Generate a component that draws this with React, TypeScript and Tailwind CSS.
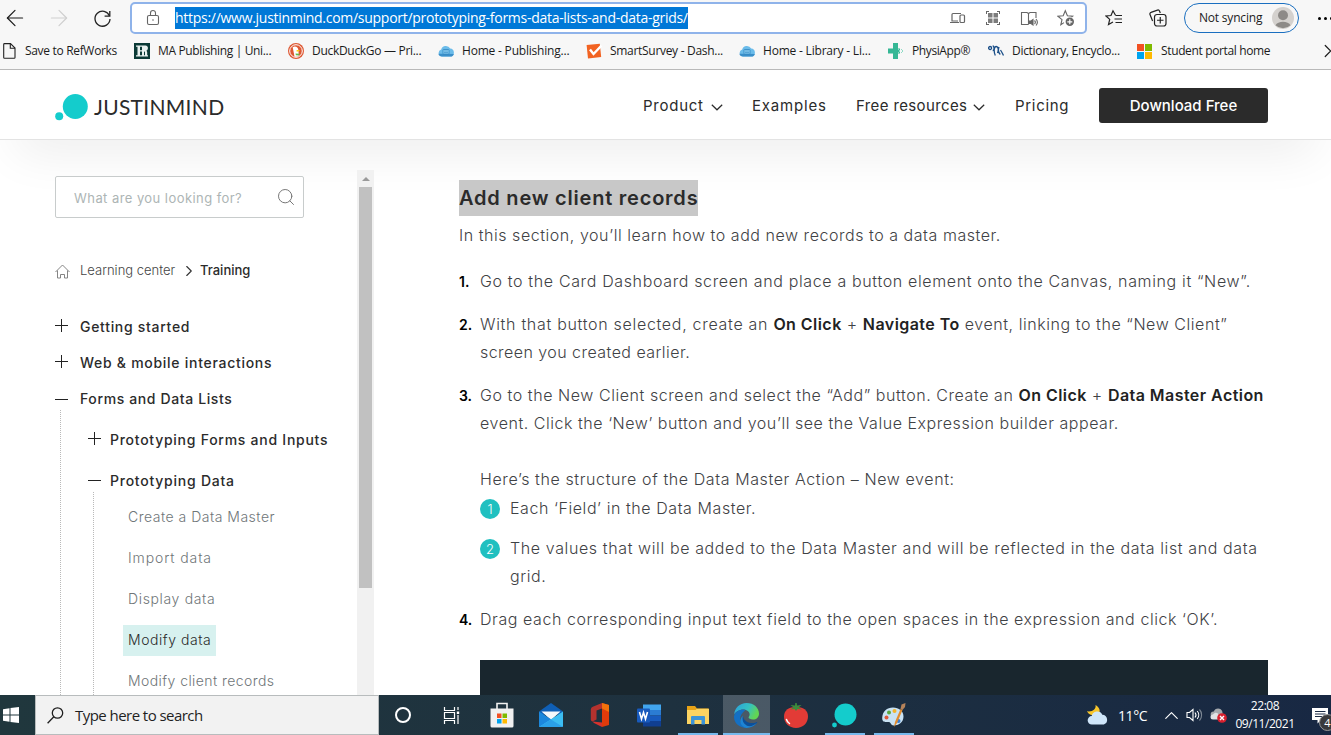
import type { ReactNode } from "react";
import { ArrowLeft, ArrowRight, ChevronRight, ChevronUp, Search } from "lucide-react";
import clsx from "clsx";

const UI_FONT = "font-['Open_Sans','Noto_Sans',sans-serif]";
const SITE_FONT = "font-['Inter','Liberation_Sans',sans-serif]";

/* ---------- browser chrome ---------- */

function CloudIcon() {
  return (
    <svg width="16" height="16" viewBox="0 0 16 16">
      <path d="M4 13.600a3.700 3.700 0 0 1-.8-7.200A4.900 4.900 0 0 1 12.200 5.500a4.100 4.100 0 0 1 .4 8.100Z" fill="#6bbcea" />
      <path d="M.4 10.800c.3 1.700 1.700 2.800 3.600 2.800h8.600c1.700 0 3-1.100 3.200-2.600Z" fill="#3b8fc9" />
      <rect x="5" y="6.500" width="6" height="4.500" rx=".5" fill="#8fd0f2" stroke="#2f86c2" strokeWidth=".8" />
      <path d="M6 8h4M6 9.500h4" stroke="#2f86c2" strokeWidth=".6" />
    </svg>
  );
}

const bookmarks: { label: string; width: string; tracking: string; icon: ReactNode }[] = [
  {
    label: "Save to RefWorks",
    width: "w-[133px]",
    tracking: "tracking-[-0.32px]",
    icon: (
      <svg width="16" height="16" viewBox="0 0 16 16" fill="none" stroke="#222" strokeWidth="1.1">
        <path d="M3.500.6h6l4.500 4.500v9.400a.8.8 0 0 1-.8.8H3.500a.8.8 0 0 1-.8-.8V1.400a.8.8 0 0 1 .8-.8Z" />
        <path d="M9.300.6v4.700H14" />
      </svg>
    ),
  },
  {
    label: "MA Publishing | Uni...",
    width: "w-[154px]",
    tracking: "tracking-[-0.35px]",
    icon: (
      <svg width="16" height="16" viewBox="0 0 16 16">
        <rect width="16" height="16" fill="#0b3a36" />
        <path d="M2 2.500h5v1.200H6v3.600h2V3.700H7V2.500h4.500c3 0 3.200 4.200.9 5.200.7.500.8 1.300.8 2.300v2.300H14v1.200h-3V9.500c0-.7-.3-1-1-1v3.800h1v1.200H7v-1.200h1V8.500H6v3.800h1v1.200H2v-1.200h1.500V3.700H2Z" fill="#e9f1ef" />
      </svg>
    ),
  },
  {
    label: "DuckDuckGo — Pri...",
    width: "w-[150px]",
    tracking: "tracking-[-0.3px]",
    icon: (
      <svg width="16" height="16" viewBox="0 0 16 16">
        <circle cx="8" cy="8" r="8" fill="#de5833" />
        <circle cx="8" cy="8" r="6.300" fill="#de5833" stroke="#fff" strokeWidth="1" />
        <path d="M4.700 4.200c2.800-1.600 5.600.2 5.700 3l.4 5.900c-1.700.9-3.300.9-4.300.3Z" fill="#fff" />
        <path d="M8.500 7.200c1.500-.4 3-.2 3.500.3-.8.8-2 1-3.300 1.200Z" fill="#fdd20a" />
        <path d="M7.500 10.500l4 .3-.6 1.800-3-.4Z" fill="#65bc46" />
      </svg>
    ),
  },
  { label: "Home - Publishing...", width: "w-[148px]", tracking: "tracking-[-0.2px]", icon: <CloudIcon /> },
  {
    label: "SmartSurvey - Dash...",
    width: "w-[153px]",
    tracking: "tracking-[-0.3px]",
    icon: (
      <svg width="16" height="16" viewBox="0 0 16 16">
        <path d="M.6 2 13.800.8 15.200 14 2 15.400Z" fill="#f26322" />
        <path d="m4 6.500 3.500 4.500L15.500 2.500" fill="none" stroke="#fff" strokeWidth="2.400" />
      </svg>
    ),
  },
  { label: "Home - Library - Li...", width: "w-[149px]", tracking: "tracking-[-0.2px]", icon: <CloudIcon /> },
  {
    label: "PhysiApp®",
    width: "w-[100px]",
    tracking: "tracking-[-0.4px]",
    icon: (
      <svg width="16" height="16" viewBox="0 0 16 16">
        <path d="M5 0h5v5.500h2v5h-2V16H5v-5.500H0v-5h5Z" fill="#35b795" />
        <path d="m10 6 2 2-2 2M13 6l2 2-2 2" fill="none" stroke="#8fdcc6" strokeWidth="1" />
      </svg>
    ),
  },
  {
    label: "Dictionary, Encyclo...",
    width: "w-[149px]",
    tracking: "tracking-[-0.3px]",
    icon: (
      <svg width="16" height="16" viewBox="0 0 16 16" fill="none" stroke="#1b4f88" strokeWidth="1.300">
        <circle cx="2.100" cy="5" r="1.500" />
        <path d="M4.700 3c1.800 0 1.800 4.500 0 4.500M7.300 12.500C5.500 8.500 6 3.500 8.300 3.500c2 0 2.500 3.500 1.200 6.500M11 4c-1 3-.5 6 1.300 7.500M12.500 7c1 1.500 2 3.500 3 5.500" />
      </svg>
    ),
  },
  {
    label: "Student portal home",
    width: "w-[140px]",
    tracking: "tracking-[-0.36px]",
    icon: (
      <span className="grid h-[15px] w-[15px] grid-cols-2 gap-px">
        <i className="bg-[#f25022]" />
        <i className="bg-[#7fba00]" />
        <i className="bg-[#00a4ef]" />
        <i className="bg-[#ffb900]" />
      </span>
    ),
  },
];

function AddressBar() {
  return (
    <div className="flex h-8 w-[957px] shrink-0 items-center rounded-[5px] border-2 border-[#8fb3ea] bg-white pl-[13px] pr-[10px]">
      <svg width="16" height="18" viewBox="0 0 16 18" fill="none" stroke="#666" strokeWidth="1.100">
        <rect x="2.500" y="6.500" width="11" height="9" rx="1.500" />
        <path d="M5.500 6.500V4a2.500 2.500 0 0 1 5 0v2.500" />
        <circle cx="8" cy="11" r=".8" fill="#666" stroke="none" />
      </svg>
      <span className="ml-[14px] h-[22px] w-[513px] whitespace-nowrap bg-[#0078d7] text-sm leading-[21px] tracking-[-0.28px] text-white">
        https://www.justinmind.com/support/prototyping-forms-data-lists-and-data-grids/
      </span>
      <div className="ml-auto flex items-center gap-[19px] text-[#666]">
        <svg width="17" height="16" viewBox="0 0 17 16" fill="none" stroke="currentColor" strokeWidth="1.200">
          <path d="M9 11H3V4.500a1 1 0 0 1 1-1h8M1 12.500h9" />
          <rect x="11" y="5" width="4.500" height="7.500" rx="1" />
        </svg>
        <svg width="16" height="16" viewBox="0 0 16 16" fill="currentColor">
          <path d="M1 4V1h3v1H2v2ZM12 1h3v3h-1V2h-2ZM1 12h1v2h2v1H1ZM14 12h1v3h-3v-1h2Z" />
          <path d="M3 3h4.500v4.500H3ZM8.500 3H13v4.500H8.500ZM3 8.500h4.500V13H3ZM8.500 8.500H13V13H8.500Z" opacity=".85" />
        </svg>
        <svg width="18" height="16" viewBox="0 0 18 16" fill="none" stroke="currentColor" strokeWidth="1.100">
          <path d="M8.500 14.500H1.500v-12h5.500l1.500 1 1.500-1h6V8M8.500 3.500v11" />
          <path d="M9.500 11v2.500h1.500l2 1.500V9.500l-2 1.500Z" fill="currentColor" />
          <path d="M14.500 10.500a2.500 2.500 0 0 1 0 3.500M16 9a5 5 0 0 1 0 6.500" />
        </svg>
        <svg width="18" height="18" viewBox="0 0 18 18" fill="none" stroke="currentColor" strokeWidth="1.100">
          <path d="M7 13.600 3.800 15.800 5 10.600.9 7.200l5.300-.5L8.300 1.700l2.100 5 5.300.5-1.200 1" />
          <circle cx="12.800" cy="12.800" r="4.200" fill="currentColor" stroke="none" />
          <path d="M12.800 10.300v5M10.300 12.800h5" stroke="#fff" strokeWidth="1.200" />
        </svg>
      </div>
    </div>
  );
}

function BrowserBar() {
  return (
    <div className={clsx("h-[70px] shrink-0 border-b border-[#b9b9b9] bg-[#f7f7f7] text-[#1b1b1b]", UI_FONT)}>
      <div className="flex h-9 items-center">
        <div className="flex w-[130px] shrink-0 items-center pl-[2px]">
          <ArrowLeft size={26} strokeWidth={1.1} />
          <ArrowRight size={26} strokeWidth={1.1} className="ml-[18px] text-[#cfcfcf]" />
          <svg className="ml-[21px]" width="19" height="19" viewBox="0 0 19 19" fill="none" stroke="#222" strokeWidth="1.300">
            <path d="M16.500 7A7.500 7.500 0 1 0 17 10" />
            <path d="M16.800 2v5.200h-5.200" />
          </svg>
        </div>
        <AddressBar />
        <svg className="ml-[18px] shrink-0" width="18" height="18" viewBox="0 0 18 18" fill="none" stroke="#222" strokeWidth="1.200">
          <path d="M10.500 6.200 8 1.800 6 6.500 1 7l3.700 3.400-1.200 5.100L8 13" />
          <path d="M10.500 6.500H17M9.500 10H17M10.500 13.500H17" />
        </svg>
        <svg className="ml-[26px] shrink-0" width="18" height="18" viewBox="0 0 18 18" fill="none" stroke="#222" strokeWidth="1.200">
          <path d="M3.600 12 1 5.500a1.600 1.600 0 0 1 1-2.100L8.500 1.100a1.600 1.600 0 0 1 2 1L11.300 4" />
          <rect x="5.500" y="5.500" width="11.500" height="11.500" rx="2.500" />
          <path d="M11.250 8v6.500M8 11.250h6.500" />
        </svg>
        <div className="ml-[17px] flex h-[30px] w-[115px] shrink-0 items-center justify-between rounded-full border border-[#1a6fc0] pl-[14px] pr-1">
          <span className="whitespace-nowrap text-xs tracking-[-0.2px]">Not syncing</span>
          <svg width="22" height="22" viewBox="0 0 22 22">
            <circle cx="11" cy="11" r="11" fill="#d4d1ce" />
            <circle cx="11" cy="8.300" r="5" fill="#8d8a87" />
            <path d="M3.500 18.300c2-4.700 13-4.700 15 0a11 11 0 0 1-15 0Z" fill="#8d8a87" />
          </svg>
        </div>
        <div className="ml-[19px] flex shrink-0 gap-[3px]">
          <i className="size-[3px] rounded-full bg-black" />
          <i className="size-[3px] rounded-full bg-black" />
          <i className="size-[3px] rounded-full bg-black" />
        </div>
      </div>
      <div className="flex h-[30px] items-center overflow-hidden pl-px">
        {bookmarks.map((b) => (
          <div key={b.label} className={clsx("flex shrink-0 items-center gap-2", b.width)}>
            <span className="w-4">{b.icon}</span>
            <span className={clsx("whitespace-nowrap text-xs", b.tracking)}>{b.label}</span>
          </div>
        ))}
        <ChevronRight size={22} strokeWidth={1.3} className="ml-[40px] shrink-0" />
      </div>
    </div>
  );
}

/* ---------- site header ---------- */

function Caret() {
  return (
    <svg width="12" height="7" viewBox="0 0 12 7" fill="none" stroke="#2b2b2b" strokeWidth="1.200" className="mt-[2px]">
      <path d="m.8.8 5.200 5 5.200-5" />
    </svg>
  );
}

function SiteHeader() {
  return (
    <header className="flex h-[70px] shrink-0 items-center border-b border-[#e3e3e3] bg-white pl-[55px] pr-[63px] text-[15px] text-[#2b2b2b] shadow-[0_25px_50px_-16px_rgba(0,0,0,0.09)]">
      <svg width="34" height="28" viewBox="0 0 34 28" className="mt-[6px]">
        <circle cx="20.300" cy="12.500" r="12.500" fill="#14cccc" />
        <circle cx="4.200" cy="22.200" r="4" fill="#14cccc" />
      </svg>
      <span className="ml-[5px] mt-[5px] font-['Lato',sans-serif] text-[21px] tracking-[0.3px]">JUSTINMIND</span>
      <nav className="ml-auto mt-[2px] flex items-center whitespace-nowrap">
        <span className="mt-[2px] flex w-[109px] items-center gap-[7px]">
          <span className="tracking-[0.75px]">Product</span>
          <Caret />
        </span>
        <span className="mt-[2px] w-[104px] tracking-[0.8px]">Examples</span>
        <span className="mt-[2px] flex w-[159px] items-center gap-[6px]">
          <span className="tracking-[0.38px]">Free resources</span>
          <Caret />
        </span>
        <span className="mt-[2px] w-[84px] tracking-[0.7px]">Pricing</span>
        <button className="h-[35px] w-[169px] rounded-[3px] bg-[#2b2b2b] pt-px text-[15px] font-medium text-white">
          Download Free
        </button>
      </nav>
    </header>
  );
}

/* ---------- sidebar ---------- */

function Toggle({ open }: { open?: boolean }) {
  return (
    <svg
      width="13"
      height="13"
      viewBox="0 0 13 13"
      stroke="#222"
      strokeWidth="1"
      shapeRendering="crispEdges"
      className={clsx(!open && "mb-[3px]")}
    >
      <path d={open ? "M0 6.500h13" : "M0 6.500h13M6.500 0v13"} />
    </svg>
  );
}

function TreeItem({ label, open, className, text }: { label: string; open?: boolean; className?: string; text: string }) {
  return (
    <div className={clsx("flex items-center whitespace-nowrap text-sm font-medium text-[#2b2b2b]", className)}>
      <Toggle open={open} />
      <span className={text}>{label}</span>
    </div>
  );
}

const pages = [
  { label: "Create a Data Master", tracking: "tracking-[0.5px]" },
  { label: "Import data", tracking: "tracking-[0.9px]" },
  { label: "Display data", tracking: "tracking-[0.65px]" },
  { label: "Modify data", tracking: "tracking-[0.55px]", active: true },
  { label: "Modify client records", tracking: "tracking-[0.43px]" },
];

function Sidebar() {
  return (
    <aside className="w-[302px] shrink-0 pt-[36px]">
      <div className="flex h-[42px] w-[249px] items-center justify-between rounded-[2px] border border-[#c8cccc] bg-white pl-[18px] pr-[7px]">
        <span className="mt-[3px] whitespace-nowrap text-[13px] tracking-[0.44px] text-[#adb5b5]">What are you looking for?</span>
        <Search size={20} strokeWidth={1.2} className="text-[#777]" />
      </div>
      <div className="mt-[43px] flex h-5 items-center whitespace-nowrap text-[13px]">
        <svg width="15" height="15" viewBox="0 0 15 15" fill="none" stroke="#777" strokeWidth=".9">
          <path d="M.5 8 7.500 1l7 7M2.500 6.500v7.500h3v-3.500h4V14h3V6.500" />
        </svg>
        <span className="ml-[10px] w-[100px] font-light text-[#444]">Learning center</span>
        <ChevronRight size={18} strokeWidth={1.5} className="text-[#333]" />
        <span className="ml-[2px] font-medium text-[#2b2b2b]">Training</span>
      </div>
      <TreeItem className="mt-[28px] h-9" label="Getting started" text="ml-3 tracking-[0.7px]" />
      <TreeItem className="h-9" label="Web & mobile interactions" text="ml-3 tracking-[0.72px]" />
      <TreeItem className="h-9" label="Forms and Data Lists" open text="ml-3 tracking-[0.62px]" />
      <div className="-mt-[7px] ml-[5px] border-l border-dotted border-[#b9b9b9] pl-[27px] pt-[9px]">
        <TreeItem className="h-[41px]" label="Prototyping Forms and Inputs" text="ml-[9px] tracking-[0.74px]" />
        <TreeItem className="h-[41px]" label="Prototyping Data" open text="ml-[9px] tracking-[0.76px]" />
        <ul className="-mt-[9px] ml-[5px] border-l border-dotted border-[#b9b9b9] pb-10 pl-[29px] pt-1">
          {pages.map((p) => (
            <li key={p.label} className="flex h-[41px] items-center whitespace-nowrap text-sm">
              <span
                className={clsx(
                  "mt-[2px] flex h-[31px] items-center px-[5px] pb-[2px] font-light",
                  p.tracking,
                  p.active ? "bg-[#d7f1ef] text-[#2b2b2b]" : "text-[#6f7678]",
                )}
              >
                {p.label}
              </span>
            </li>
          ))}
        </ul>
      </div>
    </aside>
  );
}

function ScrollTrack() {
  return (
    <div className="mt-[30px] w-[17px] shrink-0 bg-[#f1f1f1] px-[2px]">
      <div className="flex h-[17px] items-center justify-center">
        <i className="border-x-4 border-b-4 border-x-transparent border-b-[#9a9a9a]" />
      </div>
      <div className="h-[401px] w-[13px] bg-[#c1c1c1]" />
    </div>
  );
}

/* ---------- article ---------- */

function Line({ children, t }: { children: ReactNode; t: string }) {
  return <span className={clsx("block h-7 whitespace-nowrap", t)}>{children}</span>;
}

function Step({ n, className, children }: { n: number; className?: string; children: ReactNode }) {
  return (
    <li className={clsx("flex", className)}>
      <span className="h-7 w-[21px] shrink-0 pt-px text-sm font-semibold leading-7 text-black">{n}.</span>
      <div>{children}</div>
    </li>
  );
}

function Note({ n, className, children }: { n: number; className?: string; children: ReactNode }) {
  return (
    <div className={clsx("flex", className)}>
      <span className="mr-[10px] mt-[5px] flex size-5 shrink-0 items-center justify-center rounded-full bg-[#20c0c0] text-[13px] leading-none text-white">
        {n}
      </span>
      <div>{children}</div>
    </div>
  );
}

function Strong({ children }: { children: ReactNode }) {
  return <b className="font-semibold tracking-[0.45px] text-[#222]">{children}</b>;
}

function Article() {
  return (
    <main className="ml-[85px] w-[809px] shrink-0 pt-10 text-base font-light leading-7 text-[#3f4245]">
      <h2 className="h-9 w-[239px] whitespace-nowrap bg-[#c8c8c8] text-xl font-semibold leading-9 tracking-[0.78px] text-[#2b2b2b]">
        Add new client records
      </h2>
      <p className="mt-[5px]">
        <Line t="tracking-[0.54px]">In this section, you’ll learn how to add new records to a data master.</Line>
      </p>
      <ol className="mt-[18px]">
        <Step n={1}>
          <Line t="tracking-[0.64px]">
            Go to the Card Dashboard screen and place a button element onto the Canvas, naming it “New”.
          </Line>
        </Step>
        <Step n={2} className="mt-[15px]">
          <Line t="tracking-[0.56px]">
            <span className="tracking-[0.7px]">With that button selected, create an </span>
            <Strong>On Click</Strong> + <Strong>Navigate To</Strong> event, linking to the “New Client”
          </Line>
          <Line t="tracking-[0.45px]">screen you created earlier.</Line>
        </Step>
        <Step n={3} className="mt-[15px]">
          <Line t="tracking-[0.56px]">
            Go to the New Client screen and select the “Add” button. Create an <Strong>On Click</Strong> + <Strong>Data Master Action</Strong>
          </Line>
          <Line t="tracking-[0.54px]">event. Click the ‘New’ button and you’ll see the Value Expression builder appear.</Line>
          <div className="mt-7">
            <Line t="tracking-[0.6px]">Here’s the structure of the Data Master Action – New event:</Line>
          </div>
          <Note n={1} className="mt-px">
            <Line t="tracking-[0.57px]">Each ‘Field’ in the Data Master.</Line>
          </Note>
          <Note n={2} className="mt-3">
            <Line t="tracking-[0.61px]">
              The values that will be added to the Data Master and will be reflected in the data list and data
            </Line>
            <Line t="tracking-[0.6px]">grid.</Line>
          </Note>
        </Step>
        <Step n={4} className="mt-[15px]">
          <Line t="tracking-[0.57px]">
            Drag each corresponding input text field to the open spaces in the expression and click ‘OK’.
          </Line>
        </Step>
      </ol>
      <div className="ml-[21px] mt-[27px] h-[200px] bg-[#19262e]" />
    </main>
  );
}

/* ---------- taskbar ---------- */

const apps: { name: string; state?: "open" | "active"; icon: ReactNode }[] = [
  {
    name: "store",
    icon: (
      <svg width="24" height="26" viewBox="0 0 24 26">
        <path d="M7 7V1.500h10V7" fill="none" stroke="#f2f2f2" strokeWidth="1.600" />
        <path d="M.5 6.500h23V24a1.500 1.500 0 0 1-1.500 1.500H2A1.500 1.500 0 0 1 .5 24Z" fill="#f0f0f0" />
        <path d="M7 11.500h4.500V16H7Z" fill="#f25022" />
        <path d="M12.500 11.500H17V16h-4.500Z" fill="#7fba00" />
        <path d="M7 17h4.500v4.500H7Z" fill="#00a4ef" />
        <path d="M12.500 17H17v4.500h-4.500Z" fill="#ffb900" />
      </svg>
    ),
  },
  {
    name: "mail",
    icon: (
      <svg width="24" height="24" viewBox="0 0 24 24">
        <path d="M0 8.500 12 0l12 8.500-3 3H3Z" fill="#0f5fb5" />
        <path d="M2.500 8.500h19L12 17Z" fill="#f5f8fb" />
        <path d="M0 8.500 24 24H1a1 1 0 0 1-1-1Z" fill="#1c87dc" />
        <path d="M24 8.500 0 24h23a1 1 0 0 0 1-1Z" fill="#3cbdf2" />
        <path d="M12 16.500 24 24H0Z" fill="#2ba0e8" />
      </svg>
    ),
  },
  {
    name: "office",
    icon: (
      <svg width="20" height="24" viewBox="0 0 20 24">
        <path d="M12 0v5.500L6.500 7.500v9l-4 2C.8 17.800.8 17 .8 16V7c0-1.500.6-2.500 2-3.200Z" fill="#b5322e" />
        <path d="M12 0 19 2v20l-7 2V5.500Z" fill="#e03b0b" />
        <path d="M12 0 19 2v7l-7-3.500Z" fill="#f2720c" />
        <path d="m2.500 18.500 9.500 1V24L4 20Z" fill="#d6322e" />
      </svg>
    ),
  },
  {
    name: "word",
    icon: (
      <svg width="24" height="24" viewBox="0 0 24 24">
        <path d="M6 1.500h18v6H6Z" fill="#41a5ee" />
        <path d="M6 7h18v5.500H6Z" fill="#2b7cd3" />
        <path d="M6 12.500h18V18H6Z" fill="#185abd" />
        <path d="M6 18h18v5.500H6Z" fill="#103f91" />
        <rect y="5.500" width="13" height="14" rx="1" fill="#185abd" />
        <path d="m2.500 9 2 7 2-6.500 2 6.500 2-7" fill="none" stroke="#fff" strokeWidth="1.600" />
      </svg>
    ),
  },
  {
    name: "explorer",
    state: "open",
    icon: (
      <svg width="22" height="20" viewBox="0 0 22 20">
        <path d="M0 1h8l2 2.500h11.500V12H0Z" fill="#e8a317" />
        <path d="M0 5h8.500L10 3.800h12V19H0Z" fill="#fcd462" />
        <path d="M4 19.500V12a1 1 0 0 1 1-1h12a1 1 0 0 1 1 1v7.500h-3.500V15h-7v4.500Z" fill="#3c94d8" />
      </svg>
    ),
  },
  {
    name: "edge",
    state: "active",
    icon: (
      <svg width="25" height="25" viewBox="0 0 24 24">
        <defs>
          <linearGradient id="edgeTop" x1="0" y1="0" x2="1" y2=".4">
            <stop offset="0" stopColor="#2a9fe0" />
            <stop offset=".6" stopColor="#35c1c0" />
            <stop offset="1" stopColor="#62d553" />
          </linearGradient>
        </defs>
        <path d="M12 0c7 0 12 4.600 12 10.200 0 3.300-2.500 5.600-5.700 5.600-2.500 0-4.300-.8-4.300-1.800s1-1.300 1-3.200c0-2.300-2.500-4.600-6-4.600C5 6.200 1.500 8.500.2 11 .5 4.800 5.600 0 12 0Z" fill="url(#edgeTop)" />
        <path d="M9 6.200C3.500 6.200 0 10 0 13.500 0 19.500 5.400 24 12 24c-4-1.500-6.200-4.600-6.200-8.500 0-3.300 1.800-6.200 5.200-8.900a9 9 0 0 0-2-.4Z" fill="#1470c4" />
        <path d="M8.500 12c-2 5 2 10.500 7 10.500 2.700 0 5-1.400 6.700-3.500.3-.5-.2-.8-.6-.6-6 2.500-12.500-.5-13.100-6.400Z" fill="#0c4f9a" />
        <path d="M12 24c4.200 0 7.800-2 10-5-3.500 3.500-7.500 4-10 2.500-3-1.800-4.500-5-3.500-9.500-2.500 3-3 5.500-2 8 .9 2.200 3.200 3.700 5.500 4Z" fill="#1c84d6" />
      </svg>
    ),
  },
  {
    name: "tomato",
    icon: (
      <svg width="24" height="25" viewBox="0 0 24 25">
        <path d="M12 4c7 0 12 3 12 9.500S19 25 12 25 0 20 0 13.500 5 4 12 4Z" fill="#e23b36" />
        <path d="M11.300 0h1.400l.3 2.500L17.500 2l-3 2.500 3.500 2-4.500-.5L12 8l-1.500-2L6 6.500l3.500-2-3-2.500 4.500.5Z" fill="#3d8c3c" />
        <path d="M2.500 16.500c.5 2 1.500 3 3 4" fill="none" stroke="#fff" strokeWidth="1.500" strokeLinecap="round" />
      </svg>
    ),
  },
  {
    name: "justinmind",
    state: "open",
    icon: (
      <svg width="25" height="25" viewBox="0 0 25 25">
        <circle cx="13.500" cy="11.500" r="11" fill="#14cccc" />
        <circle cx="2.500" cy="22" r="2.400" fill="#14cccc" />
      </svg>
    ),
  },
  {
    name: "paint",
    state: "open",
    icon: (
      <svg width="24" height="25" viewBox="0 0 24 25">
        <path d="M11 4.500c6 0 10.500 3.500 10.500 9 0 6-5 9-10 9-2.500 0-2.500-3-4.500-3.500S0 20.500.2 15C.4 8.500 5 4.500 11 4.500Z" fill="#c9e2f3" />
        <circle cx="4.500" cy="14.500" r="2" fill="#e05a3a" />
        <circle cx="7" cy="9.500" r="2" fill="#58a83e" />
        <circle cx="12.500" cy="8" r="2" fill="#f2b42c" />
        <circle cx="16.500" cy="18" r="2" fill="#3a7ed0" />
        <path d="m12 24 1-5 5.500-13 2 1L15 20Z" fill="#e28b2d" />
        <path d="m18.500 6 1-4.500L23.500 0l-.5 4-2.500 3Z" fill="#b5835a" />
      </svg>
    ),
  },
];

function Taskbar() {
  return (
    <footer className={clsx("flex h-10 shrink-0 bg-linear-to-r from-[#20373d] via-[#1e313f] to-[#182843] text-white", UI_FONT)}>
      <div className="flex w-[35px] items-center pl-[3px]">
        <svg width="16" height="16" viewBox="0 0 16 16" fill="#fff">
          <path d="M0 2.200 6.500 1.300v6.200H0ZM7.500 1.100 16 0v7.500H7.500ZM0 8.500h6.500v6.200L0 13.800ZM7.500 8.500H16V16l-8.500-1.100Z" />
        </svg>
      </div>
      <div className="flex w-[344px] items-center border border-[#b8bcbd] bg-[#f2f2f2] pl-[11px] text-[#1f1f1f]">
        <svg width="17" height="17" viewBox="0 0 17 17" fill="none" stroke="#1f1f1f" strokeWidth="1.300">
          <circle cx="10.500" cy="6" r="5.200" />
          <path d="M6.800 9.700.6 16.200" />
        </svg>
        <span className="ml-[11px] text-[15px] tracking-[-0.55px]">Type here to search</span>
      </div>
      <div className="flex w-12 items-center justify-center">
        <i className="size-4 rounded-full border-2 border-white" />
      </div>
      <div className="flex w-[50px] items-center justify-center">
        <svg width="18" height="17" viewBox="0 0 18 17" fill="none" stroke="#fff" strokeWidth="1.200">
          <path d="M1.500 0v3.500h10V0M1.500 17v-3.500h10V17M1.500 5.500h10v6h-10ZM15 0v3M15 8v9" />
          <path d="M13.800 4.500h2.400V7h-2.400Z" fill="#fff" stroke="none" />
        </svg>
      </div>
      {apps.map((a) => (
        <div
          key={a.name}
          className={clsx(
            "flex h-10 w-[49px] items-center justify-center border-x-[0.5px] border-transparent bg-clip-padding",
            a.state === "active" && "bg-white/20",
          )}
        >
          <span
            className={clsx(
              "flex h-10 items-center justify-center border-y-2 border-t-transparent",
              a.state === "active" ? "w-full" : "w-10",
              a.state ? "border-b-[#76b9ed]" : "border-b-transparent",
            )}
          >
            {a.icon}
          </span>
        </div>
      ))}
      <div className="ml-auto flex shrink-0 items-center">
        <svg width="23" height="20" viewBox="0 0 23 20">
          <path d="M9.500 0c.8 4-2.500 7-8.500 6.300C3 10.500 9 12 12 9.500s2-7-2.500-9.500Z" fill="#f8c62b" />
          <path d="M6 19.500a4.200 4.200 0 0 1-.3-8.400 5.600 5.600 0 0 1 10.600-1.300A5 5 0 0 1 17.800 19.500Z" fill="#cfe6fa" />
        </svg>
        <span className="ml-[9px] w-[42px] whitespace-nowrap text-[14px] tracking-[-0.4px]">11°C</span>
        <ChevronUp size={23} strokeWidth={1.2} />
        <svg className="ml-[3px]" width="18" height="16" viewBox="0 0 18 16" fill="none" stroke="#fff" strokeWidth="1.100">
          <path d="M1 5.500v5h2.500l3.500 3v-11l-3.500 3Z" />
          <path d="M9 5.500c1.200 1.500 1.200 3.500 0 5" />
          <path d="M11.200 4c2 2.300 2 5.700 0 8" />
          <path d="M13.500 2.500c2.800 3 2.800 8 0 11" stroke="#7d8894" />
        </svg>
        <svg className="ml-[6px]" width="17" height="16" viewBox="0 0 17 16">
          <path d="M3.500 10.500a3 3 0 0 1 .3-6 4.500 4.500 0 0 1 8.500 0l1 6Z" fill="#a5a9ad" />
          <path d="M3 12.500a2.500 2.500 0 0 1 0-5c2-3 5.500-2 6 1v4Z" fill="#e0e2e4" />
          <circle cx="12" cy="11" r="4.800" fill="#d9202e" />
          <path d="m10 9 4 4M14 9l-4 4" stroke="#fff" strokeWidth="1.400" />
        </svg>
        <div className="ml-[6px] w-[64px] whitespace-nowrap text-center text-xs leading-[18px] tracking-[-0.45px]">
          <div>22:08</div>
          <div>09/11/2021</div>
        </div>
        <div className="relative ml-[15px] w-[19px]">
          <svg width="17" height="17" viewBox="0 0 17 17">
            <path d="M0 1h16v12H9l-3.500 3.500V13H0Z" fill="#fff" />
            <path d="M3 4.500h10.500M3 7h10.500M3 9.500h7" stroke="#1a2a44" strokeWidth="1" />
          </svg>
          <span className="absolute left-[7px] top-[7px] flex size-[17px] items-center justify-center rounded-full border border-[#9a9a9a] bg-[#3a3a3c] text-[11px] leading-none">
            4
          </span>
        </div>
      </div>
    </footer>
  );
}

export default function App() {
  return (
    <div className={clsx("flex h-[735px] w-[1331px] flex-col overflow-hidden bg-white", SITE_FONT)}>
      <BrowserBar />
      <SiteHeader />
      <div className="flex min-h-0 flex-1 overflow-hidden pl-[55px]">
        <Sidebar />
        <ScrollTrack />
        <Article />
      </div>
      <Taskbar />
    </div>
  );
}
